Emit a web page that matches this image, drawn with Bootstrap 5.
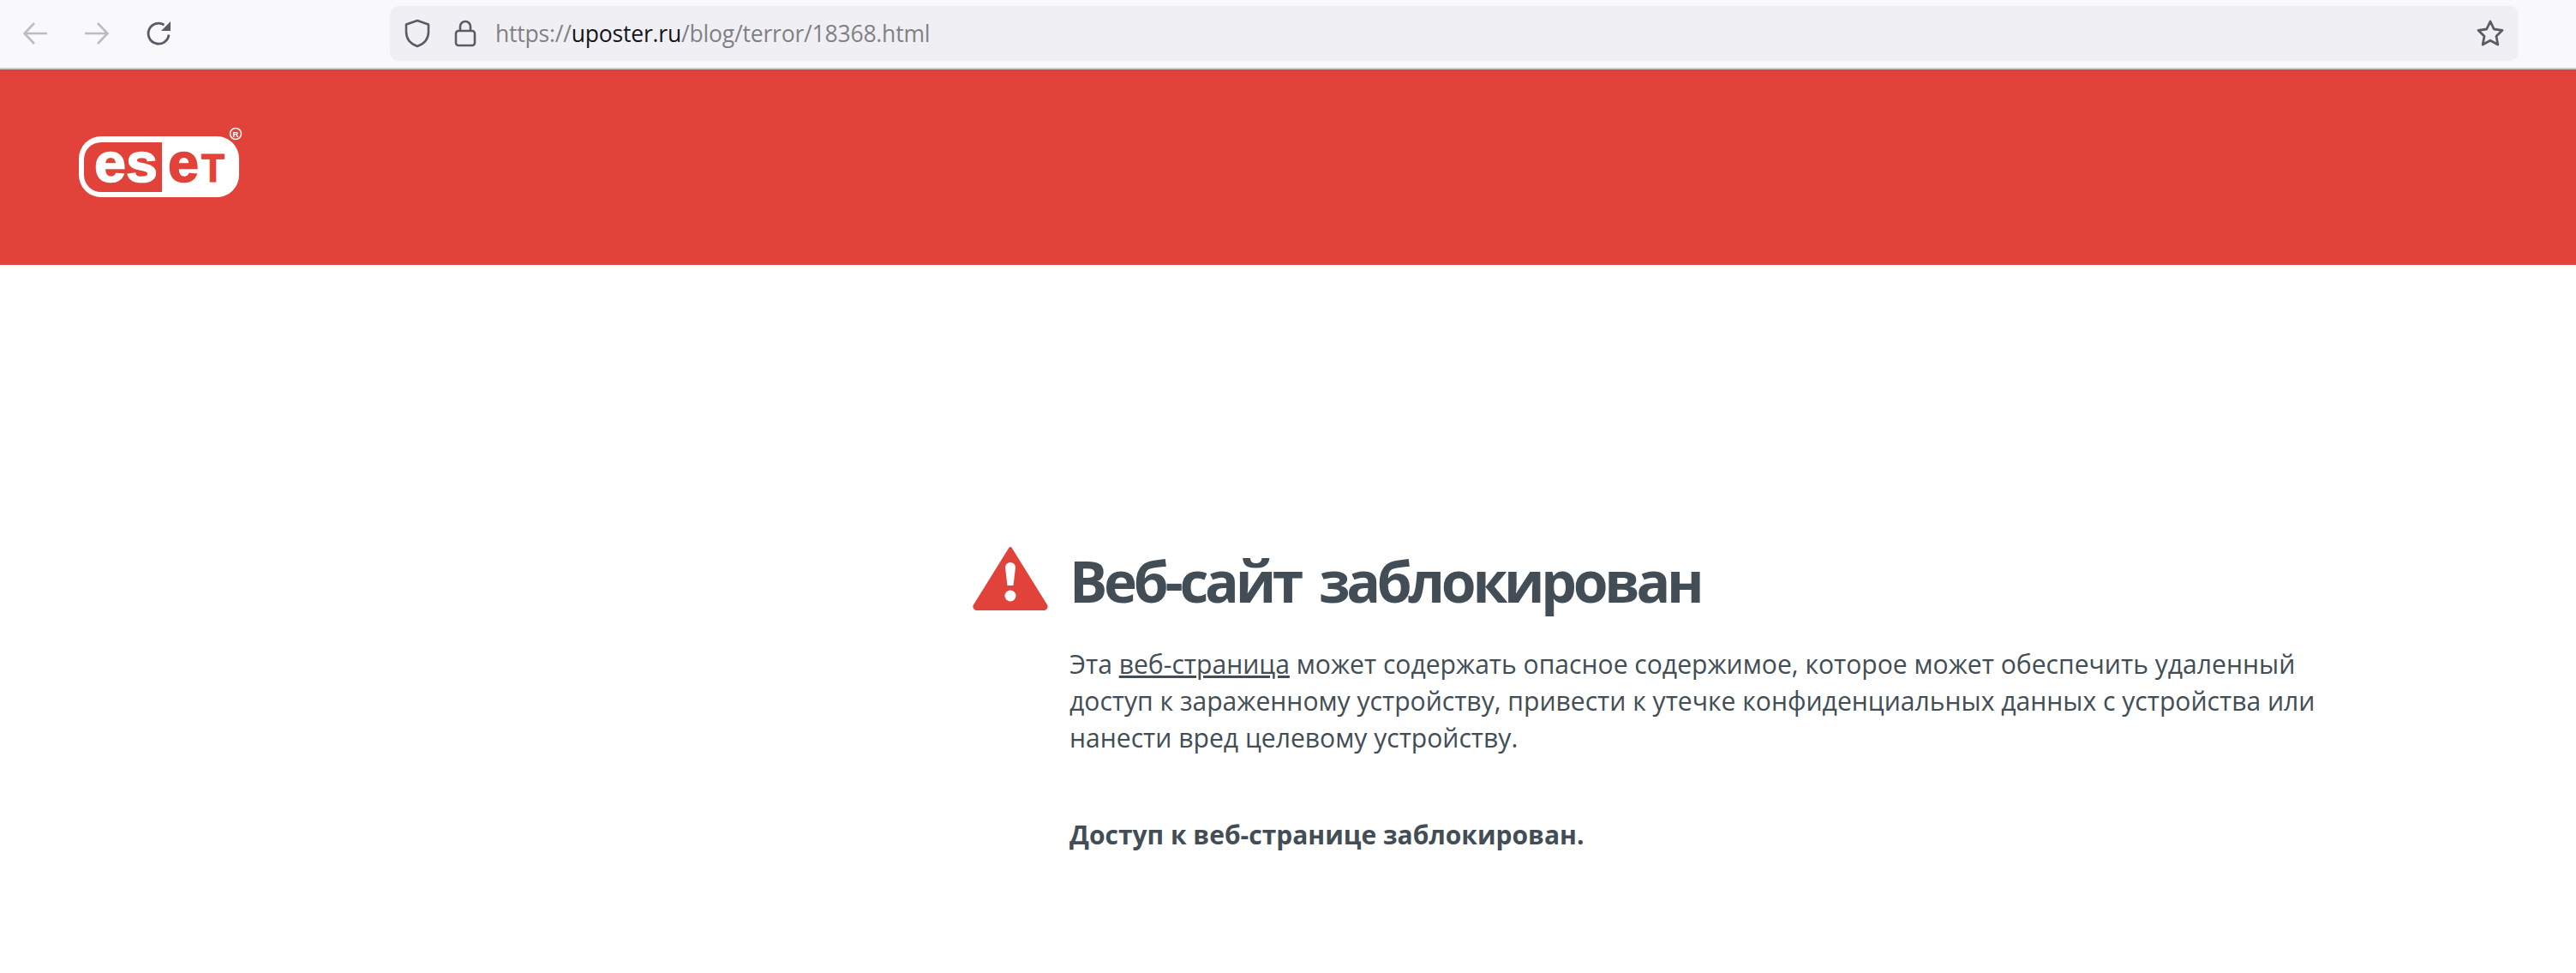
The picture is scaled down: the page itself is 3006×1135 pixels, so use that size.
<!DOCTYPE html>
<html lang="ru">
<head>
<meta charset="utf-8">
<title>Веб-сайт заблокирован</title>
<link href="https://cdn.jsdelivr.net/npm/bootstrap@5.3.0/dist/css/bootstrap.min.css" rel="stylesheet">
<style>
html,body{height:1135px;overflow:hidden;background:#fff;}
body{font-family:"Open Sans","Noto Sans",sans-serif;color:#424d56;}
.tb{height:81px;background:#f9f9fb;border-bottom:2px solid #ccc;padding-left:26px;padding-bottom:1px;}
.tb-nav{width:429px;gap:42px;}
.tb-ico{display:block;flex:none;}
.addr{width:2484px;height:64px;background:#f0f0f4;border-radius:10px;padding:0 16px 0 16px;}
.addr-lock{margin-left:27px;}
.addr-url{font-size:26.5px;color:#808084;margin-left:22px;letter-spacing:-.2px;line-height:1;}
.addr-host{color:#15141a;}
.hero{height:228px;background:#e1433a;padding:64px 0 0 90px;}
.main-wrap{padding-top:325px;padding-left:1135px;}
.warn{width:88px;flex:none;margin-right:25px;margin-top:3px;}
.ttl{font-size:66px;font-weight:700;line-height:80px;color:#424d56;margin:3px 0 0;letter-spacing:-4.3px;word-spacing:9px;}
.txt{margin-left:113px;width:1480px;font-size:30.1px;line-height:43px;color:#424d56;margin-top:36px;}
.txt a{color:inherit;}
.txt-b{margin-left:113px;font-size:30px;line-height:43px;font-weight:700;color:#424d56;margin-top:70px;}
</style>
</head>
<body>
<div class="tb d-flex align-items-center">
  <div class="tb-nav d-flex align-items-center">
    <svg class="tb-ico" width="30" height="30" viewBox="0 0 30 30" fill="none" stroke="#bdbdc1" stroke-width="2.6"><path d="M29 15H3M14 3 2.500 15 14 27"/></svg>
    <svg class="tb-ico" width="30" height="30" viewBox="0 0 30 30" fill="none" stroke="#bdbdc1" stroke-width="2.6"><path d="M1 15H27M16 3 27.500 15 16 27"/></svg>
    <svg class="tb-ico" width="32" height="32" viewBox="0 0 32 32" fill="none"><path d="M27 17.500A12 12 0 1 1 21.500 6" stroke="#5b5b66" stroke-width="2.800"/><path d="M29 2V13H18Z" fill="#5b5b66"/></svg>
  </div>
  <div class="addr d-flex align-items-center">
    <svg class="tb-ico" width="32" height="34" viewBox="0 0 32 34" fill="none" stroke="#5b5b66" stroke-width="2.600" stroke-linejoin="round"><path d="M16 2 29 6.500V15C29 24 23 29.500 16 32 9 29.500 3 24 3 15V6.500Z"/></svg>
    <svg class="tb-ico addr-lock" width="26" height="32" viewBox="0 0 26 32" fill="none" stroke="#5b5b66" stroke-width="2.600"><rect x="2" y="13" width="22" height="17" rx="3"/><path d="M7 13V8a6 6 0 0 1 12 0v5"/></svg>
    <div class="addr-url flex-grow-1">https://<span class="addr-host">uposter.ru</span>/blog/terror/18368.html</div>
    <svg class="tb-ico" width="34" height="32" viewBox="0 0 34 32" fill="none" stroke="#5b5b66" stroke-width="2.800" stroke-linejoin="round"><path d="M17 2 21.300 11 31 12.300 24 19.200 25.800 29 17 24.200 8.200 29 10 19.200 3 12.300 12.700 11Z"/></svg>
  </div>
</div>
<div class="hero">
  <svg class="d-block" width="200" height="90" viewBox="0 0 200 90">
    <rect x="2" y="14" width="187" height="71" rx="26" fill="#fff"/>
    <path d="M28 21H99V79H28A20 20 0 0 1 8 59V41A20 20 0 0 1 28 21Z" fill="#e1433a"/>
    <text x="20" y="67" font-family="Liberation Sans,sans-serif" font-weight="700" font-size="64" fill="#fff" stroke="#fff" stroke-width="1.600" textLength="74" lengthAdjust="spacingAndGlyphs">es</text>
    <text x="106" y="67" font-family="Liberation Sans,sans-serif" font-weight="700" font-size="64" fill="#e1433a" stroke="#e1433a" stroke-width="1.600" textLength="36" lengthAdjust="spacingAndGlyphs">e</text>
    <text x="145" y="67" font-family="Liberation Sans,sans-serif" font-weight="700" font-size="46" fill="#e1433a" stroke="#e1433a" stroke-width="1.200" textLength="27" lengthAdjust="spacingAndGlyphs">T</text>
    <circle cx="185" cy="11" r="6.500" fill="none" stroke="#fff" stroke-width="1.500"/>
    <text x="185" y="14.500" text-anchor="middle" font-family="Liberation Sans,sans-serif" font-weight="700" font-size="9.500" fill="#fff">R</text>
  </svg>
</div>
<div class="main-wrap">
  <div class="d-flex align-items-start">
    <svg class="warn" width="88" height="75" viewBox="0 0 88 75"><path d="M44 3 85 69a2.500 2.500 0 0 1-2.500 4H5.500A2.500 2.500 0 0 1 3 69Z" fill="#e1433a" stroke="#e1433a" stroke-width="4" stroke-linejoin="round"/><path d="M38 25a6 6 0 0 1 12 0L47.500 46h-7Z" fill="#fff"/><circle cx="44" cy="58" r="6.500" fill="#fff"/></svg>
    <h1 class="ttl">Веб-сайт заблокирован</h1>
  </div>
  <p class="txt mb-0">Эта <a href="#">веб-страница</a> может содержать опасное содержимое, которое может обеспечить удаленный доступ к зараженному устройству, привести к утечке конфиденциальных данных с устройства или нанести вред целевому устройству.</p>
  <p class="txt-b mb-0">Доступ к веб-странице заблокирован.</p>
</div>
<script src="https://cdn.jsdelivr.net/npm/bootstrap@5.3.0/dist/js/bootstrap.bundle.min.js"></script>
</body>
</html>
